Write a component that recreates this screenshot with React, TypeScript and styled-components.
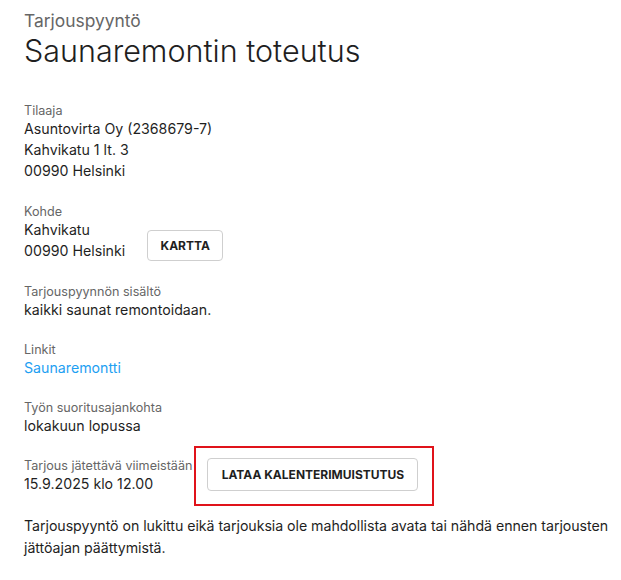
import React from "react";
import styled, { createGlobalStyle } from "styled-components";

const Global = createGlobalStyle`
  html, body { margin: 0; padding: 0; background: #fff; }
  body { font-family: Inter, "Noto Sans", sans-serif; color: #1f1f1f; }
`;

const Page = styled.div`
  padding: 11px 0 20px 24px;
`;

const Kicker = styled.div`
  font-size: 17.4px;
  color: #666;
  line-height: 20px;
`;

const Title = styled.h1`
  margin: 0;
  font-size: 30.5px;
  font-weight: 300;
  line-height: 40px;
  color: #1f1f1f;
`;

const Section = styled.section<{ $gap?: number }>`
  margin-top: ${(p) => (p.$gap ?? 22)}px;
`;

const Label = styled.div`
  font-size: 12.6px;
  color: #666;
  line-height: 15px;
`;

const Line = styled.div`
  font-size: 14.2px;
  line-height: 21px;
  color: #1f1f1f;
`;

const Link = styled.a`
  font-size: 14.2px;
  line-height: 21px;
  color: #1ea0f2;
  text-decoration: none;
  display: block;
`;

const Row = styled.div<{ $align?: string }>`
  display: flex;
  align-items: ${(p) => p.$align ?? "center"};
`;

const Button = styled.button`
  font-family: inherit;
  font-size: 12px;
  font-weight: 700;
  color: #1f1f1f;
  background: #fff;
  border: 1px solid #cfcfcf;
  border-radius: 4px;
  padding: 0;
  white-space: nowrap;
  cursor: pointer;
`;

const MapButton = styled(Button)`
  margin-left: 22px;
  height: 31px;
  width: 76px;
`;

const Highlight = styled.div`
  margin-left: 2px;
  border: 2px solid #e0131a;
  padding: 10px 14px 13px 11px;
`;

const CalButton = styled(Button)`
  display: block;
  height: 33px;
  width: 211px;
`;

const Notice = styled.p`
  margin: 9px 0 0 0;
  font-size: 14.2px;
  letter-spacing: -0.05px;
  line-height: 22px;
  color: #1f1f1f;
`;

export default function App() {
  return (
    <Page>
      <Global />
      <Kicker>Tarjouspyyntö</Kicker>
      <Title>Saunaremontin toteutus</Title>

      <Section $gap={32}>
        <Label>Tilaaja</Label>
        <Line>Asuntovirta Oy (2368679-7)</Line>
        <Line>Kahvikatu 1 lt. 3</Line>
        <Line>00990 Helsinki</Line>
      </Section>

      <Section $gap={23}>
        <Label>Kohde</Label>
        <Row $align="flex-end">
          <div>
            <Line>Kahvikatu</Line>
            <Line>00990 Helsinki</Line>
          </div>
          <MapButton>KARTTA</MapButton>
        </Row>
      </Section>

      <Section $gap={23}>
        <Label>Tarjouspyynnön sisältö</Label>
        <Line>kaikki saunat remontoidaan.</Line>
      </Section>

      <Section>
        <Label>Linkit</Label>
        <Link href="#">Saunaremontti</Link>
      </Section>

      <Section>
        <Label>Työn suoritusajankohta</Label>
        <Line>lokakuun lopussa</Line>
      </Section>

      <Section $gap={10}>
        <Row>
          <div>
            <Label>Tarjous jätettävä viimeistään</Label>
            <Line>15.9.2025 klo 12.00</Line>
          </div>
          <Highlight>
            <CalButton>LATAA KALENTERIMUISTUTUS</CalButton>
          </Highlight>
        </Row>
      </Section>

      <Notice>
        Tarjouspyyntö on lukittu eikä tarjouksia ole mahdollista avata tai nähdä ennen tarjousten jättöajan päättymistä.
      </Notice>
    </Page>
  );
}
